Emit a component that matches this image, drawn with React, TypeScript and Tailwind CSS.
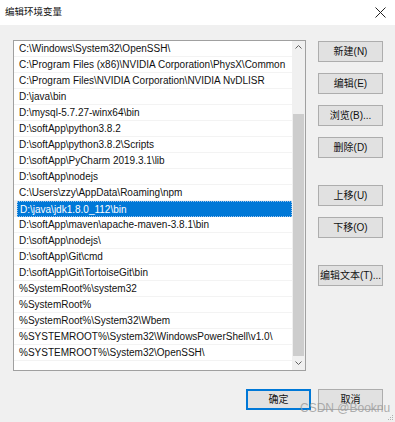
import React from "react";

const paths = [
  "C:\\Windows\\System32\\OpenSSH\\",
  "C:\\Program Files (x86)\\NVIDIA Corporation\\PhysX\\Common",
  "C:\\Program Files\\NVIDIA Corporation\\NVIDIA NvDLISR",
  "D:\\java\\bin",
  "D:\\mysql-5.7.27-winx64\\bin",
  "D:\\softApp\\python3.8.2",
  "D:\\softApp\\python3.8.2\\Scripts",
  "D:\\softApp\\PyCharm 2019.3.1\\lib",
  "D:\\softApp\\nodejs",
  "C:\\Users\\zzy\\AppData\\Roaming\\npm",
  "D:\\java\\jdk1.8.0_112\\bin",
  "D:\\softApp\\maven\\apache-maven-3.8.1\\bin",
  "D:\\softApp\\nodejs\\",
  "D:\\softApp\\Git\\cmd",
  "D:\\softApp\\Git\\TortoiseGit\\bin",
  "%SystemRoot%\\system32",
  "%SystemRoot%",
  "%SystemRoot%\\System32\\Wbem",
  "%SYSTEMROOT%\\System32\\WindowsPowerShell\\v1.0\\",
  "%SYSTEMROOT%\\System32\\OpenSSH\\",
];

const font = {
  fontFamily: '"Liberation Sans", "Noto Sans CJK SC", sans-serif',
};

function Btn({
  label,
  primary = false,
  className = "",
}: {
  label: string;
  primary?: boolean;
  className?: string;
}) {
  return (
    <button
      className={
        "h-[21px] w-[65px] flex items-center justify-center bg-[#e1e1e1] text-[10px] text-[#111] " +
        (primary ? "border-2 border-[#0078d7]" : "border border-[#adadad]") +
        " " +
        className
      }
    >
      {label}
    </button>
  );
}

export default function App() {
  return (
    <div
      className="relative w-[395px] h-[422px] bg-[#f0f0f0] flex flex-col overflow-hidden"
      style={font}
    >
      {/* title bar */}
      <div className="h-[25px] bg-white flex items-center justify-between pl-[5px] pr-[9px]">
        <span className="text-[9.5px] text-[#111]">编辑环境变量</span>
        <svg width="11" height="11" viewBox="0 0 11 11" className="text-[#222]">
          <path d="M0.5 0.5 L10.5 10.5 M10.5 0.5 L0.5 10.5" stroke="currentColor" strokeWidth="1" />
        </svg>
      </div>

      <div className="flex gap-[12px] pl-[13px] pt-[15px]">
        {/* list */}
        <div className="w-[293px] h-[331px] border border-[#a0a0a0] bg-white flex">
          <div className="flex-1 flex flex-col overflow-hidden">
            {paths.map((p, i) => (
              <div
                key={p}
                className={
                  "h-[16px] shrink-0 flex items-center whitespace-nowrap text-[10px] pl-[3px] " +
                  (i === 10 ? "bg-[#f0f0f0]" : "border-b border-[#f3f3f3]")
                }
              >
                <div
                  className={
                    "h-full flex items-center w-full px-[2px] " +
                    (i === 10
                      ? "bg-[#0078d7] text-white border border-dotted border-[#9cc4ec]"
                      : "text-[#111]")
                  }
                >
                  {p}
                </div>
              </div>
            ))}
          </div>
          {/* scrollbar */}
          <div className="w-[13px] bg-[#f0f0f0] flex flex-col">
            <div className="h-[14px] flex items-center justify-center">
              <svg width="7" height="4" viewBox="0 0 7 4">
                <path d="M0.5 3.5 L3.5 0.5 L6.5 3.5" stroke="#606060" fill="none" />
              </svg>
            </div>
            <div className="flex-1 flex flex-col pt-[60px] px-[1px]">
              <div className="h-[242px] bg-[#cdcdcd]" />
            </div>
            <div className="h-[16px] flex items-center justify-center">
              <svg width="7" height="4" viewBox="0 0 7 4">
                <path d="M0.5 0.5 L3.5 3.5 L6.5 0.5" stroke="#606060" fill="none" />
              </svg>
            </div>
          </div>
        </div>

        {/* side buttons */}
        <div className="flex flex-col pt-[1px]">
          <Btn label="新建(N)" />
          <Btn label="编辑(E)" className="mt-[11px]" />
          <Btn label="浏览(B)..." className="mt-[11px]" />
          <Btn label="删除(D)" className="mt-[11px]" />
          <Btn label="上移(U)" className="mt-[27px]" />
          <Btn label="下移(O)" className="mt-[11px]" />
          <Btn label="编辑文本(T)..." className="mt-[27px]" />
        </div>
      </div>

      {/* bottom buttons */}
      <div className="flex justify-end gap-[7px] pr-[12px] mt-[18px]">
        <Btn label="确定" primary />
        <Btn label="取消" />
      </div>

      {/* watermark */}
      <div className="absolute left-[300px] top-[399px] text-[12px] text-[#9a9a9a]/80 whitespace-nowrap">
        CSDN @Booknu
      </div>

      {/* resize grip */}
      <svg className="absolute right-[1px] bottom-[1px]" width="8" height="8" viewBox="0 0 8 8">
        <rect x="6" y="2" width="1" height="1" fill="#b0b0b0" />
        <rect x="4" y="4" width="1" height="1" fill="#b0b0b0" />
        <rect x="6" y="4" width="1" height="1" fill="#b0b0b0" />
        <rect x="2" y="6" width="1" height="1" fill="#b0b0b0" />
        <rect x="4" y="6" width="1" height="1" fill="#b0b0b0" />
        <rect x="6" y="6" width="1" height="1" fill="#b0b0b0" />
      </svg>
    </div>
  );
}
